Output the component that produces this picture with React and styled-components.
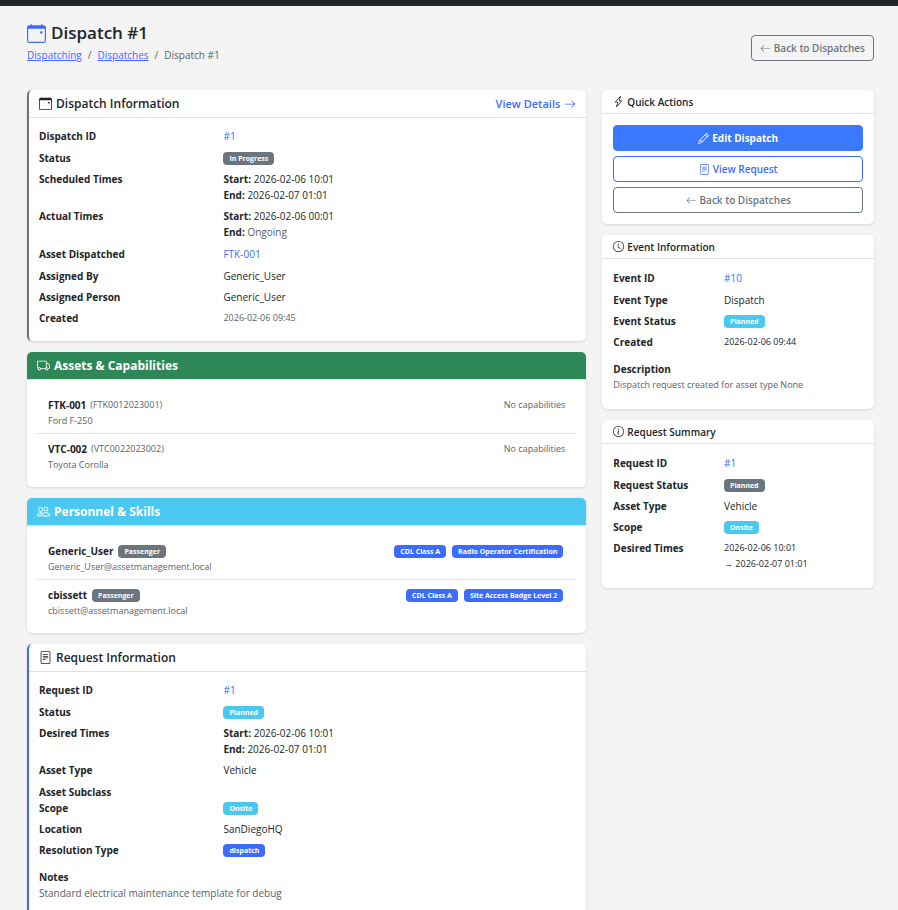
import React from "react";
import styled, { createGlobalStyle } from "styled-components";
import {
  BsArrowLeft,
  BsArrowRight,
  BsCalendarEvent,
  BsClock,
  BsFileText,
  BsInfoCircle,
  BsLightningCharge,
  BsPencil,
  BsPeople,
  BsTruck,
} from "react-icons/bs";

const color = {
  page: "#f4f4f5",
  ink: "#212529",
  muted: "#5d6167",
  line: "#dee0e3",
  primary: "#3d6bff",
  action: "#3a79ff",
  secondary: "#6c757d",
  success: "#2e8757",
  info: "#4bc8ef",
};

const GlobalStyle = createGlobalStyle`
  *, *::before, *::after { box-sizing: border-box; }
  body {
    margin: 0;
    background: ${color.page};
    color: ${color.ink};
    font: 400 10px/16px "Open Sans", "Noto Sans", sans-serif;
  }
  h1, h2, p, dl, dd, ul, ol { margin: 0; padding: 0; }
  ul, ol { list-style: none; }
`;

const TopBar = styled.div`
  height: 6px;
  background: ${color.ink};
`;

const Page = styled.main`
  padding: 16px 24px 24px 27px;
`;

const PageHeader = styled.header`
  display: flex;
  align-items: center;
  justify-content: space-between;
  min-height: 52px;
  margin-bottom: 16px;
`;

const Heading = styled.div`
  padding-bottom: 11px;
`;

const Title = styled.h1`
  display: flex;
  align-items: center;
  gap: 5px;
  margin-bottom: 3px;
  font-size: 17px;
  line-height: 22px;
  font-weight: 600;

  svg {
    width: 19px;
    height: 19px;
    color: ${color.primary};
  }
`;

const Breadcrumb = styled.ol`
  display: flex;
  color: ${color.muted};

  li + li::before {
    content: "/";
    padding: 0 6px;
  }

  a {
    color: ${color.primary};
  }
`;

const variants = {
  solid: { bg: color.action, fg: "#fff", border: color.action },
  primary: { bg: "transparent", fg: color.primary, border: color.primary },
  secondary: { bg: "transparent", fg: color.secondary, border: color.secondary },
};

const Button = styled.button`
  display: flex;
  align-items: center;
  justify-content: center;
  gap: 3px;
  height: 26px;
  padding: 0 8px;
  border: 1px solid ${(p) => variants[p.$variant].border};
  border-radius: 4px;
  background: ${(p) => variants[p.$variant].bg};
  color: ${(p) => variants[p.$variant].fg};
  font: inherit;
  font-weight: ${(p) => (p.$variant === "solid" ? 700 : 600)};
  cursor: pointer;

  svg {
    width: 11px;
    height: 11px;
  }
`;

const Columns = styled.div`
  display: flex;
  align-items: flex-start;
  margin: 0 -8px;
`;

const Column = styled.div`
  display: flex;
  flex-direction: column;
  gap: 11px;
  width: calc(100% * ${(p) => p.$span} / 12);
  padding: 0 8px;
`;

const Card = styled.section`
  border-left: ${(p) => (p.$accent ? `2px solid ${p.$accent}` : "0")};
  border-radius: 5px;
  background: #fff;
  box-shadow: 0 1px 3px rgba(0, 0, 0, 0.12);
`;

const CardHeader = styled.div`
  display: flex;
  align-items: center;
  justify-content: space-between;
  height: 28px;
  padding: 0 10px;
  border-bottom: 1px solid ${color.line};
  border-radius: ${(p) => (p.$fill ? "5px 5px 0 0" : "0")};
  background: ${(p) => p.$fill || "transparent"};
  background-clip: padding-box;
  color: ${(p) => (p.$fill ? "#fff" : color.ink)};
`;

const SideHeader = styled(CardHeader)`
  height: 24px;
  padding: 0 11px;
`;

const CardTitle = styled.h2`
  display: flex;
  align-items: center;
  gap: 4px;
  font-size: 12px;
  font-weight: ${(p) => (p.$strong ? 700 : 600)};

  svg {
    width: 13px;
    height: 13px;
  }
`;

const SideTitle = styled(CardTitle)`
  gap: 3px;
  font-size: 10px;

  svg {
    width: 11px;
    height: 11px;
  }
`;

const HeaderLink = styled.a`
  display: flex;
  align-items: center;
  gap: 4px;
  color: ${color.primary};
  font-size: 11px;
  font-weight: 600;
  text-decoration: none;

  svg {
    width: 12px;
    height: 12px;
  }
`;

const CardBody = styled.div`
  padding: 10px;
`;

const SideBody = styled.div`
  padding: 11px;
`;

const Actions = styled(SideBody)`
  display: flex;
  flex-direction: column;
  gap: 5px;
`;

const Details = styled.dl`
  margin: 0 -8px;
`;

const DetailRow = styled.div`
  display: flex;
  padding-bottom: ${(p) => p.$gap}px;

  dt {
    flex: none;
    width: calc(100% * ${(p) => p.$span} / 12);
    padding: 0 8px;
    font-weight: 700;
  }

  dd {
    flex: 1;
    min-width: 0;
    padding: 0 8px;
  }
`;

const ValueLink = styled.a`
  display: block;
  padding-bottom: 1px;
  color: ${color.primary};
  text-decoration: none;
`;

const Line = styled.div`
  b {
    font-weight: 700;
  }
`;

const Muted = styled.span`
  color: ${color.muted};
`;

const Small = styled.span`
  display: block;
  color: ${(p) => (p.$muted ? color.muted : "inherit")};
  font-size: 9px;
`;

const Badge = styled.span`
  display: block;
  width: fit-content;
  height: 13px;
  margin-top: 2px;
  padding: 0 6px;
  border-radius: 4px;
  background: ${(p) => color[p.$tone]};
  color: #fff;
  font-size: 7px;
  line-height: 13px;
  font-weight: 700;
  white-space: nowrap;
`;

const Note = styled.div`
  padding: 6px 0 5px;

  h3 {
    margin: 0;
    font-size: 10px;
    font-weight: 700;
  }

  p {
    color: ${color.muted};
    font-size: ${(p) => (p.$small ? 9 : 10)}px;
  }
`;

const ListItem = styled.li`
  display: flex;
  justify-content: space-between;
  padding: 7px 11px 4px;

  & + & {
    border-top: 1px solid ${color.line};
  }
`;

const ItemName = styled.div`
  display: flex;
  gap: ${(p) => p.$gap}px;

  b {
    font-weight: 700;
  }
`;

const BadgeGroup = styled.div`
  display: flex;
  gap: 6px;
  padding-right: 2px;
`;

function Detail({ label, span = 4, gap = 5, children }) {
  return (
    <DetailRow $span={span} $gap={children ? gap : 0}>
      <dt>{label}</dt>
      <dd>{children}</dd>
    </DetailRow>
  );
}

function Times({ start, end }) {
  return (
    <>
      <Line><b>Start:</b> {start}</Line>
      <Line><b>End:</b> {end}</Line>
    </>
  );
}

const assets = [
  { name: "FTK-001", serial: "(FTK0012023001)", model: "Ford F-250" },
  { name: "VTC-002", serial: "(VTC0022023002)", model: "Toyota Corolla" },
];

const people = [
  {
    name: "Generic_User",
    email: "Generic_User@assetmanagement.local",
    skills: ["CDL Class A", "Radio Operator Certification"],
  },
  {
    name: "cbissett",
    email: "cbissett@assetmanagement.local",
    skills: ["CDL Class A", "Site Access Badge Level 2"],
  },
];

export default function App() {
  return (
    <>
      <GlobalStyle />
      <TopBar />
      <Page>
        <PageHeader>
          <Heading>
            <Title><BsCalendarEvent />Dispatch #1</Title>
            <nav aria-label="Breadcrumb">
              <Breadcrumb>
                <li><a href="#dispatching">Dispatching</a></li>
                <li><a href="#dispatches">Dispatches</a></li>
                <li>Dispatch #1</li>
              </Breadcrumb>
            </nav>
          </Heading>
          <Button type="button" $variant="secondary"><BsArrowLeft />Back to Dispatches</Button>
        </PageHeader>

        <Columns>
          <Column $span={8}>
            <Card $accent={color.secondary}>
              <CardHeader>
                <CardTitle><BsCalendarEvent />Dispatch Information</CardTitle>
                <HeaderLink href="#details">View Details <BsArrowRight /></HeaderLink>
              </CardHeader>
              <CardBody>
                <Details>
                  <Detail label="Dispatch ID"><ValueLink href="#dispatch-1">#1</ValueLink></Detail>
                  <Detail label="Status"><Badge $tone="secondary">In Progress</Badge></Detail>
                  <Detail label="Scheduled Times"><Times start="2026-02-06 10:01" end="2026-02-07 01:01" /></Detail>
                  <Detail label="Actual Times" gap={6}><Times start="2026-02-06 00:01" end={<Muted>Ongoing</Muted>} /></Detail>
                  <Detail label="Asset Dispatched"><ValueLink href="#ftk-001">FTK-001</ValueLink></Detail>
                  <Detail label="Assigned By">Generic_User</Detail>
                  <Detail label="Assigned Person">Generic_User</Detail>
                  <Detail label="Created"><Small $muted>2026-02-06 09:45</Small></Detail>
                </Details>
              </CardBody>
            </Card>

            <Card>
              <CardHeader $fill={color.success}>
                <CardTitle $strong><BsTruck />Assets &amp; Capabilities</CardTitle>
              </CardHeader>
              <CardBody>
                <ul>
                  {assets.map((a) => (
                    <ListItem key={a.name}>
                      <div>
                        <ItemName $gap={4}><b>{a.name}</b><Small $muted>{a.serial}</Small></ItemName>
                        <Small $muted>{a.model}</Small>
                      </div>
                      <Small $muted>No capabilities</Small>
                    </ListItem>
                  ))}
                </ul>
              </CardBody>
            </Card>

            <Card>
              <CardHeader $fill={color.info}>
                <CardTitle $strong><BsPeople />Personnel &amp; Skills</CardTitle>
              </CardHeader>
              <CardBody>
                <ul>
                  {people.map((p) => (
                    <ListItem key={p.name}>
                      <div>
                        <ItemName $gap={5}><b>{p.name}</b><Badge $tone="secondary">Passenger</Badge></ItemName>
                        <Small $muted>{p.email}</Small>
                      </div>
                      <BadgeGroup>
                        {p.skills.map((s) => <Badge key={s} $tone="primary">{s}</Badge>)}
                      </BadgeGroup>
                    </ListItem>
                  ))}
                </ul>
              </CardBody>
            </Card>

            <Card $accent={color.primary}>
              <CardHeader>
                <CardTitle><BsFileText />Request Information</CardTitle>
              </CardHeader>
              <CardBody>
                <Details>
                  <Detail label="Request ID"><ValueLink href="#request-1">#1</ValueLink></Detail>
                  <Detail label="Status"><Badge $tone="info">Planned</Badge></Detail>
                  <Detail label="Desired Times"><Times start="2026-02-06 10:01" end="2026-02-07 01:01" /></Detail>
                  <Detail label="Asset Type" gap={6}>Vehicle</Detail>
                  <Detail label="Asset Subclass" />
                  <Detail label="Scope"><Badge $tone="info">Onsite</Badge></Detail>
                  <Detail label="Location">SanDiegoHQ</Detail>
                  <Detail label="Resolution Type"><Badge $tone="primary">dispatch</Badge></Detail>
                </Details>
                <Note>
                  <h3>Notes</h3>
                  <p>Standard electrical maintenance template for debug</p>
                </Note>
              </CardBody>
            </Card>
          </Column>

          <Column $span={4}>
            <Card>
              <SideHeader><SideTitle><BsLightningCharge />Quick Actions</SideTitle></SideHeader>
              <Actions>
                <Button type="button" $variant="solid"><BsPencil />Edit Dispatch</Button>
                <Button type="button" $variant="primary"><BsFileText />View Request</Button>
                <Button type="button" $variant="secondary"><BsArrowLeft />Back to Dispatches</Button>
              </Actions>
            </Card>

            <Card>
              <SideHeader><SideTitle><BsClock />Event Information</SideTitle></SideHeader>
              <SideBody>
                <Details>
                  <Detail span={5} label="Event ID"><ValueLink href="#event-10">#10</ValueLink></Detail>
                  <Detail span={5} label="Event Type">Dispatch</Detail>
                  <Detail span={5} label="Event Status"><Badge $tone="info">Planned</Badge></Detail>
                  <Detail span={5} label="Created"><Small>2026-02-06 09:44</Small></Detail>
                </Details>
                <Note $small>
                  <h3>Description</h3>
                  <p>Dispatch request created for asset type None</p>
                </Note>
              </SideBody>
            </Card>

            <Card>
              <SideHeader><SideTitle><BsInfoCircle />Request Summary</SideTitle></SideHeader>
              <SideBody>
                <Details>
                  <Detail span={5} label="Request ID"><ValueLink href="#request-1">#1</ValueLink></Detail>
                  <Detail span={5} label="Request Status"><Badge $tone="secondary">Planned</Badge></Detail>
                  <Detail span={5} label="Asset Type">Vehicle</Detail>
                  <Detail span={5} label="Scope"><Badge $tone="info">Onsite</Badge></Detail>
                  <Detail span={5} label="Desired Times">
                    <Small>2026-02-06 10:01</Small>
                    <Small>→ 2026-02-07 01:01</Small>
                  </Detail>
                </Details>
              </SideBody>
            </Card>
          </Column>
        </Columns>
      </Page>
    </>
  );
}
